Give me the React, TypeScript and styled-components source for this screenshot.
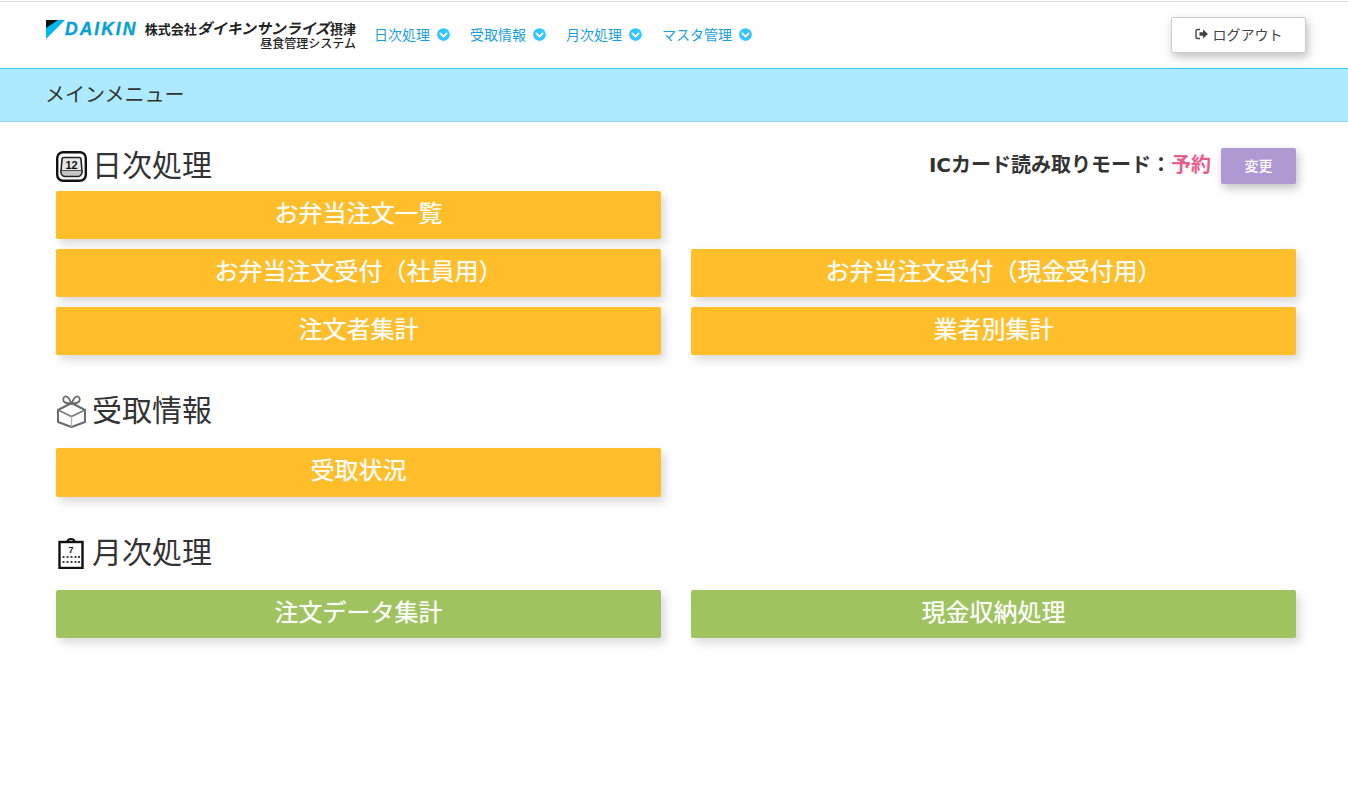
import React from "react";
import styled, { createGlobalStyle } from "styled-components";
import { FaChevronCircleDown } from "react-icons/fa";

const Global = createGlobalStyle`
  html, body { margin: 0; padding: 0; background: #fff; }
  body { font-family: "Noto Sans CJK JP", "Noto Sans", sans-serif; color: #333; }
  * { box-sizing: border-box; }
`;

const Page = styled.div`
  width: 1348px;
  height: 799px;
  overflow: hidden;
  background: #fff;
  padding-top: 1px;
`;

const Header = styled.header`
  height: 67px;
  border-top: 1px solid #dedede;
  padding: 0 42px 0 46px;
  display: flex;
  align-items: center;
`;

const Logo = styled.div`
  width: 310px;
  height: 30px;
  display: flex;
  justify-content: space-between;
`;

const LogoBrand = styled.div`
  display: flex;
  align-items: flex-start;
  gap: 0;
  flex: none;
`;

const BrandName = styled.span`
  font-family: "Liberation Sans", sans-serif;
  font-weight: 700;
  font-style: italic;
  font-size: 17.5px;
  line-height: 18px;
  letter-spacing: 2px;
  color: #0a9fd8;
  -webkit-text-stroke: 0.4px #0a9fd8;
`;

const LogoText = styled.div`
  display: flex;
  flex-direction: column;
  align-items: flex-end;
  color: #222;
  white-space: nowrap;
`;

const LogoLine = styled.span<{ $strong?: boolean }>`
  font-size: ${(p) => (p.$strong ? 14 : 12)}px;
  font-weight: 500;
  line-height: ${(p) => (p.$strong ? 15 : 13)}px;
`;

const LogoSmall = styled.span`
  font-size: 13px;
  font-weight: 700;
`;

const LogoKana = styled.span`
  font-size: 14.9px;
  font-weight: 700;
  font-style: italic;
`;

const Nav = styled.nav`
  display: flex;
  gap: 20px;
  margin-left: 18px;
  margin-top: -2px;
`;

const NavItem = styled.a`
  display: flex;
  align-items: center;
  gap: 7px;
  font-size: 14px;
  line-height: 20px;
  color: #1a9fdc;
  svg {
    color: #33c5ff;
    width: 13px;
    height: 13px;
    margin-top: 1px;
  }
`;

const LogoutButton = styled.button`
  margin-left: auto;
  margin-top: 0;
  width: 135px;
  height: 36px;
  background: #fff;
  border: 1px solid #ccc;
  border-radius: 2px;
  box-shadow: 2px 4px 10px rgba(0, 0, 0, 0.25);
  display: flex;
  align-items: center;
  justify-content: center;
  gap: 4px;
  font: inherit;
  font-size: 14px;
  color: #444;
  padding: 0 0 2px;
`;

const TitleBar = styled.div`
  height: 54px;
  background: #aeeafd;
  border-top: 1px solid #2fcdf5;
  border-bottom: 1px solid #8fd8ee;
  padding: 0 0 4px 45px;
  display: flex;
  align-items: center;
  font-size: 20px;
  color: #333;
`;

const Content = styled.main`
  padding: 0 52px 0 56px;
`;

const Section = styled.section``;

const SectionHead = styled.div<{ $h: number; $pb: number }>`
  height: ${(p) => p.$h}px;
  padding-bottom: ${(p) => p.$pb}px;
  display: flex;
  align-items: flex-end;
  justify-content: space-between;
`;

const SectionTitle = styled.h2`
  margin: 0;
  display: flex;
  align-items: center;
  gap: 5px;
  font-size: 30px;
  font-weight: 400;
  line-height: 36px;
  color: #333;
  svg { flex: none; }
`;

const TitleText = styled.span`
  transform: translateY(-3px);
`;

const ModeBox = styled.div`
  display: flex;
  align-items: center;
  gap: 10px;
`;

const ModeLabel = styled.span`
  font-family: "DejaVu Sans", "Noto Sans CJK JP", sans-serif;
  font-size: 20px;
  line-height: 28px;
  font-weight: 700;
  color: #333;
  margin-bottom: 3px;
`;

const ModeValue = styled.span`
  color: #e85d8a;
`;

const ChangeButton = styled.button`
  width: 75px;
  height: 36px;
  border: 0;
  border-radius: 2px;
  background: #ae99d2;
  color: #fff;
  font: inherit;
  font-size: 14px;
  font-weight: 500;
  padding: 0 0 3px;
  box-shadow: 2px 4px 10px rgba(0, 0, 0, 0.25);
`;

const ButtonGrid = styled.div`
  display: grid;
  grid-template-columns: 605px 605px;
  column-gap: 30px;
  row-gap: 10px;
`;

const MenuButton = styled.button<{ $color: string; $h?: number }>`
  height: ${(p) => p.$h ?? 48}px;
  border: 0;
  border-radius: 2px;
  padding: 0 0 7px;
  background: ${(p) => p.$color};
  color: #fff;
  font: inherit;
  font-size: 24px;
  font-weight: 400;
  line-height: 34px;
  box-shadow: 4px 5px 10px rgba(0, 0, 0, 0.15);
  text-shadow: 0 0 1px rgba(255, 255, 255, 0.6);
`;

const Solo = styled.div`
  grid-column: 1 / -1;
  display: grid;
  grid-template-columns: 605px;
`;

const LogoMark = () => (
  <svg width="19" height="19" viewBox="0 0 19 19">
    <polygon points="0,0 19,0 0,19" fill="#00b6ee" />
    <polygon points="0,0 12,0 0,8" fill="#111" />
  </svg>
);

const LogoutIcon = () => (
  <svg width="14" height="12" viewBox="0 0 14 12">
    <path d="M5 1.500H2.500A1.500 1.500 0 0 0 1 3v6a1.500 1.500 0 0 0 1.500 1.500H5" fill="none" stroke="#444" strokeWidth="1.400" />
    <path d="M4.500 4.200H8V1.600L13 6l-5 4.400V7.800H4.500z" fill="#444" />
  </svg>
);

const CalendarIcon = () => (
  <svg width="31" height="31" viewBox="0 0 31 31">
    <rect x="1.200" y="1.200" width="28.600" height="28.600" rx="6" fill="#fff" stroke="#111" strokeWidth="2.400" />
    <path d="M8 6.500h15a2 2 0 0 1 2 2L26 20H5L6 8.500a2 2 0 0 1 2-2z" fill="#e6e6e6" stroke="#222" strokeWidth="1.600" />
    <path d="M5 20c-.5 3 1.500 5.500 4 5.500h13c2.500 0 4.500-2.500 4-5.500" fill="#c4c4c4" stroke="#222" strokeWidth="1.600" />
    <text x="15.500" y="17.500" textAnchor="middle" fontFamily="Liberation Sans, sans-serif" fontWeight="700" fontSize="11" fill="#111">12</text>
  </svg>
);

const BoxIcon = () => (
  <svg width="31" height="33" viewBox="0 0 31 33" fill="none" stroke="#6a6a6a" strokeWidth="2" strokeLinejoin="round">
    <path d="M15.500 8 29 15v12l-13.500 5L2 27V15z" fill="#fff" />
    <path d="M2 15l13.500 6.500L29 15" stroke="#777" strokeWidth="1.500" />
    <path d="M15.500 21.500V32" stroke="#b5b5b5" strokeWidth="1.400" />
    <path d="M15.500 9 9 7.500C6.500 6 7 2 9 1.500c2-.5 4.500 2 6.500 7.500 2-5.500 4.500-8 6.500-7.500 2 .5 2.500 4.500 0 6L15.500 9z" strokeWidth="1.800" />
  </svg>
);

const MonthIcon = () => (
  <svg width="31" height="31" viewBox="0 0 31 31">
    <rect x="3.500" y="4" width="23" height="26" fill="#fff" stroke="#111" strokeWidth="2.400" />
    <path d="M11 4.500a4 3.500 0 0 1 8 0" fill="none" stroke="#111" strokeWidth="2" />
    <text x="15" y="14.500" textAnchor="middle" fontFamily="Liberation Sans, sans-serif" fontWeight="700" fontSize="9" fill="#111">7</text>
    <g fill="#444">
      {[19, 24].flatMap((y) =>
        [7.500, 11.500, 15.500, 19.500, 23].map((x) => <rect key={`${x}-${y}`} x={x - 1} y={y - 1} width="2" height="2" />)
      )}
    </g>
  </svg>
);

const navItems = ["日次処理", "受取情報", "月次処理", "マスタ管理"];
const YELLOW = "#ffbe2a";
const GREEN = "#9fc45f";

export default function App() {
  return (
    <Page>
      <Global />
      <Header>
        <Logo>
          <LogoBrand>
            <LogoMark />
            <BrandName>DAIKIN</BrandName>
          </LogoBrand>
          <LogoText>
            <LogoLine $strong>
              <LogoSmall>株式会社</LogoSmall>
              <LogoKana>ダイキンサンライズ</LogoKana>
              <LogoSmall>摂津</LogoSmall>
            </LogoLine>
            <LogoLine>昼食管理システム</LogoLine>
          </LogoText>
        </Logo>
        <Nav>
          {navItems.map((n) => (
            <NavItem key={n}>
              {n}
              <FaChevronCircleDown />
            </NavItem>
          ))}
        </Nav>
        <LogoutButton>
          <LogoutIcon />
          ログアウト
        </LogoutButton>
      </Header>
      <TitleBar>メインメニュー</TitleBar>
      <Content>
        <Section>
          <SectionHead $h={69} $pb={7}>
            <SectionTitle>
              <CalendarIcon />
              <TitleText>日次処理</TitleText>
            </SectionTitle>
            <ModeBox>
              <ModeLabel>
                ICカード読み取りモード：<ModeValue>予約</ModeValue>
              </ModeLabel>
              <ChangeButton>変更</ChangeButton>
            </ModeBox>
          </SectionHead>
          <ButtonGrid>
            <Solo>
              <MenuButton $color={YELLOW}>お弁当注文一覧</MenuButton>
            </Solo>
            <MenuButton $color={YELLOW}>お弁当注文受付（社員用）</MenuButton>
            <MenuButton $color={YELLOW}>お弁当注文受付（現金受付用）</MenuButton>
            <MenuButton $color={YELLOW}>注文者集計</MenuButton>
            <MenuButton $color={YELLOW}>業者別集計</MenuButton>
          </ButtonGrid>
        </Section>
        <Section>
          <SectionHead $h={93} $pb={19}>
            <SectionTitle>
              <BoxIcon />
              <TitleText>受取情報</TitleText>
            </SectionTitle>
          </SectionHead>
          <ButtonGrid>
            <Solo>
              <MenuButton $color={YELLOW} $h={49}>受取状況</MenuButton>
            </Solo>
          </ButtonGrid>
        </Section>
        <Section>
          <SectionHead $h={93} $pb={19}>
            <SectionTitle>
              <MonthIcon />
              <TitleText>月次処理</TitleText>
            </SectionTitle>
          </SectionHead>
          <ButtonGrid>
            <MenuButton $color={GREEN}>注文データ集計</MenuButton>
            <MenuButton $color={GREEN}>現金収納処理</MenuButton>
          </ButtonGrid>
        </Section>
      </Content>
    </Page>
  );
}
